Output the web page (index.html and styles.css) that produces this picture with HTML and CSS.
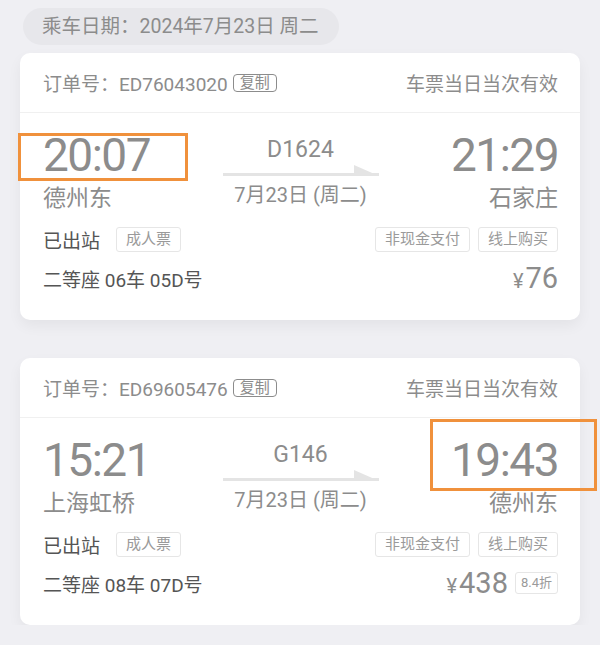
FILE: index.html
```html
<!DOCTYPE html>
<html lang="zh-CN">
<head>
  <meta charset="UTF-8">
  <meta name="viewport" content="width=device-width, initial-scale=1.0">
  <title>我的车票</title>
  <link rel="stylesheet" href="styles.css">
</head>
<body>

<div class="page">
  <div class="date-pill">乘车日期：2024年7月23日 周二</div>

  <!-- 第一张车票 -->
  <div class="ticket">
    <div class="ticket-head">
      <div class="order">订单号：ED76043020<span class="copy">复制</span></div>
      <div class="valid">车票当日当次有效</div>
    </div>
    <div class="ticket-body">
      <div class="route">
        <div class="stop">
          <div class="time">20:07</div>
          <div class="station">德州东</div>
        </div>
        <div class="train">
          <div class="train-no">D1624</div>
          <svg class="arrow" viewBox="0 0 156 14">
            <rect x="0" y="9" width="156" height="3" fill="#e4e4e4"/>
            <polygon points="131,1 156,12 131,12" fill="#e4e4e4"/>
          </svg>
          <div class="train-date">7月23日 (周二)</div>
        </div>
        <div class="stop stop-end">
          <div class="time">21:29</div>
          <div class="station">石家庄</div>
        </div>
      </div>
      <div class="row row-status">
        <div class="status">已出站 <span class="tag">成人票</span></div>
        <div class="tags"><span class="tag">非现金支付</span><span class="tag">线上购买</span></div>
      </div>
      <div class="row row-seat">
        <div class="seat">二等座 06车 05D号</div>
        <div class="price"><span class="yen">¥</span>76</div>
      </div>
    </div>
    <div class="mark mark-dep"></div>
  </div>

  <!-- 第二张车票 -->
  <div class="ticket">
    <div class="ticket-head">
      <div class="order">订单号：ED69605476<span class="copy">复制</span></div>
      <div class="valid">车票当日当次有效</div>
    </div>
    <div class="ticket-body">
      <div class="route">
        <div class="stop">
          <div class="time">15:21</div>
          <div class="station">上海虹桥</div>
        </div>
        <div class="train">
          <div class="train-no">G146</div>
          <svg class="arrow" viewBox="0 0 156 14">
            <rect x="0" y="9" width="156" height="3" fill="#e4e4e4"/>
            <polygon points="131,1 156,12 131,12" fill="#e4e4e4"/>
          </svg>
          <div class="train-date">7月23日 (周二)</div>
        </div>
        <div class="stop stop-end">
          <div class="time">19:43</div>
          <div class="station">德州东</div>
        </div>
      </div>
      <div class="row row-status">
        <div class="status">已出站 <span class="tag">成人票</span></div>
        <div class="tags"><span class="tag">非现金支付</span><span class="tag">线上购买</span></div>
      </div>
      <div class="row row-seat">
        <div class="seat">二等座 08车 07D号</div>
        <div class="price"><span class="yen">¥</span>438<span class="discount">8.4折</span></div>
      </div>
    </div>
    <div class="mark mark-arr"></div>
  </div>
</div>

</body>
</html>
```

FILE: styles.css
```css
body {
  margin: 0;
  background-color: #efeff3;
  font-family: Roboto, "Noto Sans CJK SC", sans-serif;
  color: #8c8c8c;
}

.page {
  padding: 8px 20px 0;
}

/* Date en haut */
.date-pill {
  display: inline-block;
  margin-left: 3px;
  height: 37px;
  line-height: 37px;
  padding: 0 20px 0 19px;
  border-radius: 19px;
  background-color: #e7e7eb;
  font-size: 19.5px;
}

/* Carte billet */
.ticket {
  position: relative;
  margin-top: 8px;
  background-color: #fff;
  border-radius: 10px;
  box-shadow: 0 6px 14px rgba(0, 0, 0, 0.05);
}

.ticket + .ticket {
  margin-top: 38px;
}

.ticket-head {
  display: flex;
  justify-content: space-between;
  align-items: center;
  height: 59px;
  padding: 0 22px 0 23px;
  border-bottom: 1px solid #f0f0f0;
  font-size: 19px;
}

.order {
  display: flex;
  align-items: center;
}

.copy {
  display: inline-block;
  margin-left: 5px;
  padding: 0 6px;
  border: 1.5px solid #8c8c8c;
  border-radius: 4px;
  font-size: 15px;
  line-height: 16px;
}

.ticket-body {
  padding: 18px 22px 25px 23px;
}

.route {
  display: grid;
  grid-template-columns: 1fr 156px 1fr;
}

.time {
  font-size: 46px;
  line-height: 48px;
  letter-spacing: -1.5px;
}

.station {
  margin-top: 5px;
  font-size: 23px;
  line-height: 30px;
}

.stop-end {
  text-align: right;
}

.train {
  text-align: center;
}

.train-no {
  margin-top: 5px;
  font-size: 23px;
  line-height: 28px;
}

.arrow {
  display: block;
  width: 156px;
  height: 14px;
}

.train-date {
  margin-top: 4px;
  font-size: 20px;
  line-height: 26px;
}

.row {
  display: flex;
  justify-content: space-between;
  align-items: center;
}

.row-status {
  margin-top: 12px;
  height: 26px;
}

.row-seat {
  margin-top: 9px;
  height: 34px;
}

.status,
.seat {
  font-size: 19px;
  color: #555;
}

.status {
  display: flex;
  align-items: center;
  gap: 16px;
}

.tags {
  display: flex;
  gap: 8px;
}

.tag {
  display: inline-block;
  box-sizing: border-box;
  height: 25px;
  line-height: 23px;
  padding: 0 9px;
  border: 1px solid #e6e6e6;
  border-radius: 3px;
  font-size: 15px;
  color: #9a9a9a;
}

.price {
  display: flex;
  align-items: baseline;
  font-size: 29px;
}

.yen {
  margin-right: 2px;
  font-size: 20px;
}

.discount {
  align-self: center;
  box-sizing: border-box;
  height: 22px;
  line-height: 20px;
  margin-left: 7px;
  padding: 0 5px;
  border: 1px solid #e6e6e6;
  border-radius: 3px;
  font-size: 13px;
  color: #9a9a9a;
}

/* Cadres orange d'annotation */
.mark {
  position: absolute;
  box-sizing: border-box;
  border: 3px solid #f0913c;
}

.mark-dep {
  left: -2px;
  top: 80px;
  width: 170px;
  height: 48px;
}

.mark-arr {
  left: 410px;
  top: 61px;
  width: 167px;
  height: 72px;
}
```
